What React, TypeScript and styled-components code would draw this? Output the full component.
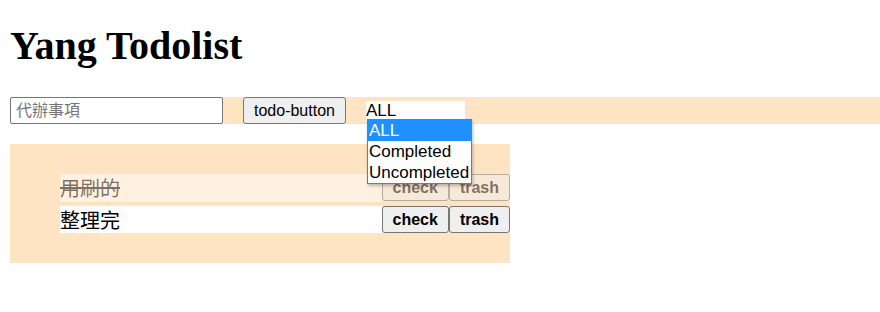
import React from 'react';
import styled, { createGlobalStyle } from 'styled-components';

const colors = {
  panel: 'bisque',
  highlight: '#1e90ff',
  buttonBg: '#efefef',
  buttonBorder: '#767676',
};

const GlobalStyle = createGlobalStyle`
  body {
    margin: 0;
    background: #fff;
    font-family: "Liberation Sans", "Noto Sans CJK TC", Arial, sans-serif;
  }
`;

const Page = styled.div`
  padding-left: 10px;
`;

const Title = styled.h1`
  margin: 23px 0 0;
  font-family: "Liberation Serif", "Times New Roman", serif;
  font-size: 40px;
  line-height: 46px;
  font-weight: bold;
`;

const Form = styled.form`
  display: flex;
  align-items: center;
  gap: 20px;
  height: 27px;
  margin-top: 28px;
  background: ${colors.panel};
`;

const TodoInput = styled.input`
  box-sizing: border-box;
  width: 213px;
  height: 27px;
  padding: 1px 5px;
  border: 1px solid ${colors.buttonBorder};
  border-radius: 2px;
  font-family: "Liberation Sans", "Noto Sans CJK TC", sans-serif;
  font-size: 16px;
  background: #fff;
  &::placeholder {
    color: #757575;
  }
`;

const Button = styled.button<{ bold?: boolean }>`
  box-sizing: border-box;
  height: 27px;
  padding: 0 10px;
  border: 1px solid ${colors.buttonBorder};
  border-radius: 3px;
  background: ${colors.buttonBg};
  color: #000;
  font-family: "Liberation Sans", Arial, sans-serif;
  font-size: 16px;
  font-weight: ${props => (props.bold ? 'bold' : 'normal')};
  cursor: pointer;
`;

const SelectWrap = styled.div`
  position: relative;
  height: 20px;
`;

const Filter = styled.select`
  appearance: none;
  display: block;
  width: 99px;
  height: 20px;
  padding: 0;
  border: none;
  outline: none;
  background: #fff;
  font-family: "Liberation Sans", Arial, sans-serif;
  font-size: 17px;
  color: #000;
`;

const Dropdown = styled.ul`
  position: absolute;
  left: 1px;
  top: 18px;
  z-index: 2;
  margin: 0;
  padding: 0;
  width: 105px;
  box-sizing: border-box;
  list-style: none;
  background: #fff;
  border: 1px solid #7a7a7a;
  box-shadow: 1px 2px 3px rgba(0, 0, 0, 0.25);
`;

const Option = styled.li<{ selected?: boolean }>`
  height: 21.33px;
  line-height: 21px;
  padding: 0 1px;
  font-size: 17px;
  white-space: nowrap;
  background: ${props => (props.selected ? colors.highlight : '#fff')};
  color: ${props => (props.selected ? '#fff' : '#000')};
`;

const TodoContainer = styled.div`
  width: 500px;
  box-sizing: border-box;
  margin-top: 20px;
  padding: 30px 0 30px 50px;
  background: ${colors.panel};
`;

const TodoList = styled.ul`
  display: flex;
  flex-direction: column;
  gap: 4px;
  margin: 0;
  padding: 0;
  list-style: none;
`;

const TodoItem = styled.li<{ completed?: boolean }>`
  display: flex;
  height: ${props => (props.completed ? 28 : 27)}px;
  opacity: ${props => (props.completed ? 0.5 : 1)};
`;

const TodoText = styled.span<{ completed?: boolean }>`
  flex: 1;
  background: #fff;
  font-family: "Noto Sans CJK TC", "Liberation Sans", sans-serif;
  font-size: 20px;
  line-height: 27px;
  color: #000;
  text-decoration: ${props => (props.completed ? 'line-through' : 'none')};
`;

const todos = [
  { text: '用刷的', completed: true },
  { text: '整理完', completed: false },
];

const filters = ['ALL', 'Completed', 'Uncompleted'];

const App: React.FC = () => {
  return (
    <Page>
      <GlobalStyle />
      <Title>Yang Todolist</Title>
      <Form onSubmit={e => e.preventDefault()}>
        <TodoInput type="text" placeholder="代辦事項" />
        <Button type="submit">todo-button</Button>
        <SelectWrap>
          <Filter defaultValue="all">
            <option value="all">ALL</option>
            <option value="completed">Completed</option>
            <option value="uncompleted">Uncompleted</option>
          </Filter>
          <Dropdown>
            {filters.map((f, i) => (
              <Option key={f} selected={i === 0}>
                {f}
              </Option>
            ))}
          </Dropdown>
        </SelectWrap>
      </Form>
      <TodoContainer>
        <TodoList>
          {todos.map(todo => (
            <TodoItem key={todo.text} completed={todo.completed}>
              <TodoText completed={todo.completed}>{todo.text}</TodoText>
              <Button bold>check</Button>
              <Button bold>trash</Button>
            </TodoItem>
          ))}
        </TodoList>
      </TodoContainer>
    </Page>
  );
};

export default App;
